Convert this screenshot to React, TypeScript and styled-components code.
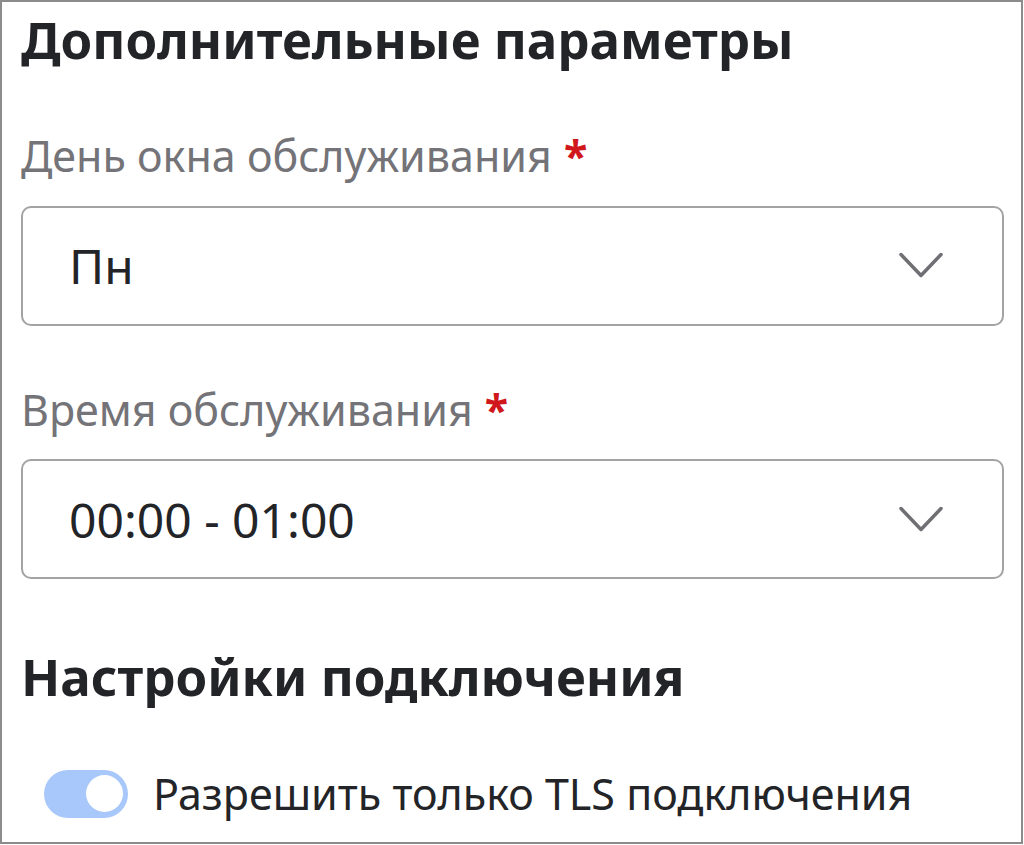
import React from "react";
import styled, { createGlobalStyle } from "styled-components";

const Global = createGlobalStyle`
  html, body { margin: 0; padding: 0; background: #fff; }
  body { font-family: "Noto Sans", "Open Sans", sans-serif; color: #232428; }
  * { box-sizing: border-box; }
`;

const Frame = styled.div`
  width: 1023px;
  height: 844px;
  border: 2px solid #8c8c8c;
  padding: 0 20px 0 19px;
  overflow: hidden;
  display: flex;
  flex-direction: column;
`;

const SectionTitle = styled.h2<{ $top: number }>`
  margin: ${(p) => p.$top}px 0 0;
  font-size: 51px;
  font-weight: 700;
  line-height: 1.36;
  color: #232428;
`;

const Field = styled.div<{ $top: number }>`
  margin-top: ${(p) => p.$top}px;
  display: flex;
  flex-direction: column;
  gap: 20px;
`;

const Label = styled.label`
  font-size: 43px;
  line-height: 1.36;
  color: #737378;
`;

const Required = styled.span`
  color: #d0181c;
  margin-left: 12px;
  font-weight: 700;
`;

const SelectBox = styled.div`
  height: 120px;
  width: 983px;
  border: 2px solid #a3a3a6;
  border-radius: 10px;
  display: flex;
  align-items: center;
  justify-content: space-between;
  padding: 0 59px 0 46px;
`;

const Value = styled.span`
  font-size: 48px;
  line-height: 1.36;
  color: #232428;
`;

const ToggleRow = styled.div`
  margin-top: 53px;
  margin-left: 23px;
  display: flex;
  align-items: center;
  gap: 25px;
`;

const Track = styled.div`
  width: 84px;
  height: 48px;
  border-radius: 24px;
  background: #a8c7fa;
  display: flex;
  align-items: center;
  justify-content: flex-end;
  padding: 0 5px;
`;

const Thumb = styled.div`
  width: 37px;
  height: 37px;
  border-radius: 50%;
  background: #fff;
`;

const ToggleText = styled.span`
  font-size: 43px;
  line-height: 1.36;
  color: #232428;
`;

const Chevron = () => (
  <svg width="44" height="27" viewBox="0 0 44 27" fill="none">
    <path d="M2 2.5 L22 23.5 L42 2.5" stroke="#6f6f74" strokeWidth="3.5" strokeLinecap="round" strokeLinejoin="round" />
  </svg>
);

const Select = ({ value }: { value: string }) => (
  <SelectBox>
    <Value>{value}</Value>
    <Chevron />
  </SelectBox>
);

export default function App() {
  return (
    <>
      <Global />
      <Frame>
        <SectionTitle $top={3}>Дополнительные параметры</SectionTitle>
        <Field $top={53}>
          <Label>
            День окна обслуживания<Required>*</Required>
          </Label>
          <Select value="Пн" />
        </Field>
        <Field $top={55}>
          <Label>
            Время обслуживания<Required>*</Required>
          </Label>
          <Select value="00:00 - 01:00" />
        </Field>
        <SectionTitle $top={63}>Настройки подключения</SectionTitle>
        <ToggleRow>
          <Track>
            <Thumb />
          </Track>
          <ToggleText>Разрешить только TLS подключения</ToggleText>
        </ToggleRow>
      </Frame>
    </>
  );
}
